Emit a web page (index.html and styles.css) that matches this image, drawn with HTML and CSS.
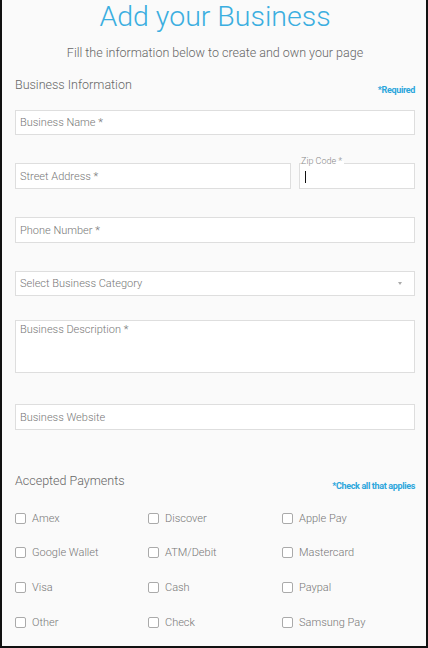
FILE: index.html
```html
<!DOCTYPE html>
<html>
<head>
<meta charset="utf-8">
<link rel="stylesheet" href="styles.css">
</head>
<body>
<div class="page">
  <h1 class="title">Add your Business</h1>
  <p class="subtitle">Fill the information below to create and own your page</p>

  <div class="section-head">
    <span class="section-title">Business Information</span>
    <span class="note">*Required</span>
  </div>

  <div class="field field-first">Business Name *</div>

  <div class="row-address">
    <div class="field">Street Address *</div>
    <div class="field field-zip">
      <span class="float-label">Zip Code *</span>
      <span class="cursor"></span>
    </div>
  </div>

  <div class="field field-gap">Phone Number *</div>

  <div class="field field-gap field-select">
    <span>Select Business Category</span>
    <span class="arrow"></span>
  </div>

  <div class="field field-area">Business Description *</div>

  <div class="field field-web">Business Website</div>

  <div class="section-head section-pay">
    <span class="section-title">Accepted Payments</span>
    <span class="note">*Check all that applies</span>
  </div>

  <div class="checks">
    <label class="check"><span class="box"></span>Amex</label>
    <label class="check"><span class="box"></span>Discover</label>
    <label class="check"><span class="box"></span>Apple Pay</label>
    <label class="check"><span class="box"></span>Google Wallet</label>
    <label class="check"><span class="box"></span>ATM/Debit</label>
    <label class="check"><span class="box"></span>Mastercard</label>
    <label class="check"><span class="box"></span>Visa</label>
    <label class="check"><span class="box"></span>Cash</label>
    <label class="check"><span class="box"></span>Paypal</label>
    <label class="check"><span class="box"></span>Other</label>
    <label class="check"><span class="box"></span>Check</label>
    <label class="check"><span class="box"></span>Samsung Pay</label>
  </div>
</div>
</body>
</html>
```

FILE: styles.css
```css
html, body {
  margin: 0;
  padding: 0;
  background: #fff;
}

.page {
  box-sizing: border-box;
  width: 428px;
  height: 648px;
  border: 2px solid #111;
  border-top: none;
  background: #fafafa;
  padding: 0 11px 0 13px;
  font-family: Roboto, "Liberation Sans", sans-serif;
  overflow: hidden;
}

.title {
  margin: 0;
  font-size: 28.5px;
  line-height: 34px;
  font-weight: 300;
  color: #3aaee0;
  text-align: center;
}

.subtitle {
  margin: 11px 0 0;
  font-size: 12.5px;
  line-height: 16px;
  font-weight: 300;
  color: #666;
  text-align: center;
}

.section-head {
  display: flex;
  justify-content: space-between;
  align-items: flex-end;
  margin-top: 16px;
  height: 16px;
}

.section-title {
  font-size: 12.5px;
  line-height: 16px;
  font-weight: 300;
  color: #666;
}

.note {
  font-size: 9px;
  line-height: 12px;
  font-weight: 700;
  color: #2ba6dc;
  letter-spacing: -0.35px;
  margin-bottom: -3px;
}

.field {
  box-sizing: border-box;
  height: 26px;
  background: #fff;
  border: 1px solid #dedede;
  padding: 0 4px;
  display: flex;
  align-items: center;
  font-size: 11px;
  font-weight: 300;
  color: #777;
  position: relative;
}

.field-first {
  margin-top: 17px;
  height: 25px;
}

.row-address {
  display: grid;
  grid-template-columns: 1fr 116px;
  column-gap: 8px;
  margin-top: 28px;
}

.field-gap {
  margin-top: 28px;
}

.field-select {
  height: 25px;
  justify-content: space-between;
  padding-right: 12px;
}

.arrow {
  width: 0;
  height: 0;
  border-left: 2.5px solid transparent;
  border-right: 2.5px solid transparent;
  border-top: 3px solid #aaa;
}

.field-area {
  margin-top: 24px;
  height: 53px;
  align-items: flex-start;
  padding-top: 2px;
}

.field-web {
  margin-top: 31px;
}

.float-label {
  position: absolute;
  left: 1px;
  top: -8px;
  font-size: 9px;
  line-height: 10px;
  color: #888;
  background: linear-gradient(#fafafa 50%, #fff 50%);
  padding-right: 2px;
}

.cursor {
  position: absolute;
  left: 5px;
  top: 7px;
  width: 1px;
  height: 12px;
  background: #111;
}

.section-pay {
  margin-top: 43px;
}

.checks {
  display: grid;
  grid-template-columns: 133px 134px 1fr;
  grid-auto-rows: 34.6px;
  margin-top: 12px;
}

.check {
  display: flex;
  align-items: center;
  font-size: 11px;
  font-weight: 300;
  color: #777;
}

.box {
  box-sizing: border-box;
  width: 11px;
  height: 11px;
  border: 1px solid #aaa;
  border-radius: 2px;
  background: #fff;
  margin-right: 6px;
}
```
